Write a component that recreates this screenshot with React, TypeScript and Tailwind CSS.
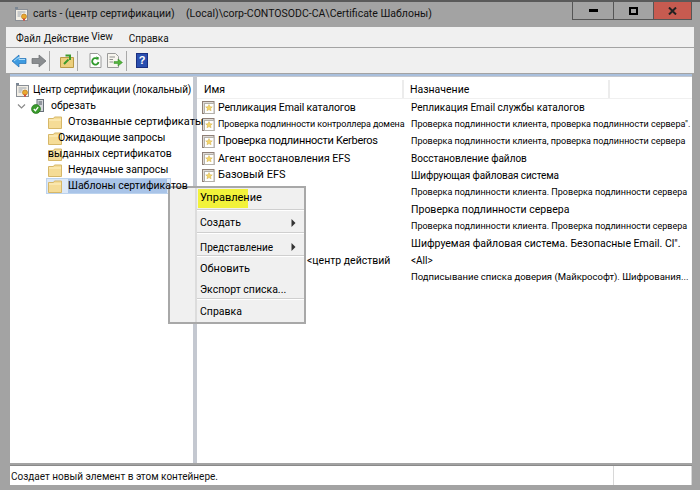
import React from "react"

const uiFont = { fontFamily: 'Roboto, "Noto Sans", sans-serif' }

function CertIcon() {
  return (
    <svg width="15" height="16" viewBox="0 0 15 16" className="shrink-0">
      <rect x="1" y="1" width="3" height="3" fill="#7b8794" />
      <rect x="1.5" y="3.5" width="12" height="11" fill="#f3efe6" stroke="#8a8f96" />
      <path d="M3.5 6h8M3.5 8h4M3.5 10h3" stroke="#9aa3ad" strokeWidth="1" />
      <circle cx="10" cy="10.5" r="2.5" fill="#e9a92f" stroke="#b9771c" strokeWidth="0.7" />
      <path d="M9 12.5v2.5l1-.8 1 .8v-2.5" fill="#d84b3a" />
    </svg>
  )
}

function ServerIcon() {
  return (
    <svg width="14" height="15" viewBox="0 0 14 15" className="shrink-0">
      <rect x="6" y="0.5" width="6.5" height="12" fill="#d5d8dc" stroke="#68707a" />
      <path d="M7.5 3h3.5M7.5 5h3.5" stroke="#4c5560" />
      <circle cx="5" cy="10" r="4.5" fill="#3a9a2c" stroke="#1f6d1a" strokeWidth="0.6" />
      <path d="M2.8 10l1.6 1.7L7.2 8.2" fill="none" stroke="#fff" strokeWidth="1.3" />
    </svg>
  )
}

function FolderIcon() {
  return (
    <svg width="14" height="13" viewBox="0 0 14 13" className="shrink-0">
      <path d="M0.5 2.5V12.5H13.5V1H6.5L5.5 2.5Z" fill="#f5dc97" stroke="#d6b768" />
      <path d="M1 4H13" stroke="#fff2c6" />
    </svg>
  )
}

function TemplateIcon() {
  return (
    <svg width="13" height="14" viewBox="0 0 13 14" className="shrink-0">
      <rect x="0.5" y="0.5" width="11.5" height="12" fill="#dedad4" stroke="#8f8078" />
      <rect x="2.5" y="2.5" width="9.5" height="10" fill="#fff" stroke="#b3b0aa" />
      <path d="M7 3.5l1 2.2 2.3.2-1.7 1.6.5 2.3-2.1-1.2-2.1 1.2.5-2.3-1.7-1.6 2.3-.2Z" fill="#f3d56a" stroke="#c9a234" strokeWidth="0.4" />
    </svg>
  )
}

function Toolbar() {
  return (
    <div className="h-[25px] mt-px mx-[6px] bg-[#f0f0f0] flex items-center pl-[5px]">
      <svg width="16" height="14" viewBox="0 0 16 14">
        <path d="M1 7L8 1V4.5H15V9.5H8V13Z" fill="#3f9be0" stroke="#1f6fb5" strokeWidth="0.7" />
        <path d="M3 7L8 3V5.5H14" fill="none" stroke="#a9dcfb" />
      </svg>
      <svg width="16" height="14" viewBox="0 0 16 14" className="ml-[4px]">
        <path d="M15 7L8 1V4.5H1V9.5H8V13Z" fill="#8a8d90" stroke="#6a6d70" strokeWidth="0.7" />
      </svg>
      <div className="w-px h-[20px] bg-[#a8a8a8] ml-[2px]" />
      <svg width="14" height="14" viewBox="0 0 14 14" className="ml-[10px]">
        <path d="M0.5 3.5V13.5H13.5V3.5Z" fill="#eccf7d" stroke="#b99a47" />
        <path d="M4 10L8.5 5.5M5.5 1.5H10V6" fill="none" stroke="#3c9a2c" strokeWidth="2" />
      </svg>
      <div className="w-px h-[20px] bg-[#a8a8a8] ml-[3px]" />
      <svg width="13" height="15" viewBox="0 0 13 15" className="ml-[11px]">
        <path d="M1 0.5H8.5L12 3.5V14.5H1Z" fill="#fff" stroke="#9a9a9a" />
        <path d="M9.5 9a3.2 3.2 0 1 1-1-3" fill="none" stroke="#2f9a2c" strokeWidth="1.8" />
        <path d="M7 3.5L10 4.5L9 7.5Z" fill="#2f9a2c" />
      </svg>
      <svg width="16" height="15" viewBox="0 0 16 15" className="ml-[5px]">
        <path d="M0.5 0.5H8.5L11.5 3.5V14.5H0.5Z" fill="#f7f5ee" stroke="#9a9a9a" />
        <path d="M2.5 4H8M2.5 6.5H6M2.5 9H6" stroke="#8f8f8f" />
        <path d="M7 8.5H11V6L15.5 9.5L11 13V10.5H7Z" fill="#55b33c" stroke="#2f8a25" strokeWidth="0.5" />
      </svg>
      <div className="w-px h-[20px] bg-[#a8a8a8] ml-[3px]" />
      <div className="ml-[9px] w-[12px] h-[15px] bg-[#2a4fb0] border border-[#1a2f80] text-white text-[11px] font-bold leading-[13px] text-center" style={{ fontFamily: '"Liberation Sans", sans-serif' }}>?</div>
    </div>
  )
}

const treeRows = [
  { label: "Отозванные сертификаты", cls: "pl-[20px] text-[11px]" },
  { label: "Ожидающие запросы", cls: "pl-[10px] text-[10.5px]" },
  { label: "выданных сертификатов", cls: "pl-0 text-[10.5px]" },
  { label: "Неудачные запросы", cls: "pl-[20px] text-[10.5px]" },
]

function Tree() {
  return (
    <div className="w-[183px] bg-white shrink-0 pt-[5px] text-[10.5px] text-black leading-[16px]">
      <div className="flex items-center h-[16px] pl-[5px] gap-[3px] whitespace-nowrap">
        <CertIcon />
        <span className="text-[10px] tracking-[-0.1px]">Центр сертификации (локальный)</span>
      </div>
      <div className="flex items-center h-[16px] pl-[7px] whitespace-nowrap">
        <svg width="9" height="7" viewBox="0 0 9 7">
          <path d="M1 1.5L4.5 5L8 1.5" fill="none" stroke="#8a8a8a" strokeWidth="1.2" />
        </svg>
        <span className="ml-[5px]"><ServerIcon /></span>
        <span className="ml-[6px]">обрезать</span>
      </div>
      {treeRows.map((r) => (
        <div key={r.label} className="relative flex items-center h-[16px] pl-[38px] whitespace-nowrap">
          <FolderIcon />
          <span className={`absolute left-[38px] ${r.cls} z-10`}>{r.label}</span>
        </div>
      ))}
      <div className="relative flex items-center h-[16px] ml-[36px] w-[125px] bg-[#dce8f7] border border-[#bcd3ee] pl-px whitespace-nowrap">
        <FolderIcon />
        <span className="absolute left-[21px] h-[14px] leading-[14px] bg-[#a9c4e8] w-[99px] z-30">Шаблоны сертификатов</span>
      </div>
    </div>
  )
}

const templates = [
  { name: "Репликация Email каталогов", nameCls: "text-[10.5px] tracking-[-0.14px]", purpose: "Репликация Email службы каталогов", cls: "text-[10px]", icon: true },
  { name: "Проверка подлинности контроллера домена", nameCls: "text-[9px] tracking-[-0.1px]", purpose: "Проверка подлинности клиента, проверка подлинности сервера\".", cls: "text-[9px]", icon: true },
  { name: "Проверка подлинности Kerberos", nameCls: "text-[11px] tracking-[-0.28px]", purpose: "Проверка подлинности клиента, проверка подлинности сервера", cls: "text-[9px]", icon: true },
  { name: "Агент восстановления EFS", nameCls: "text-[10.5px]", purpose: "Восстановление файлов", cls: "text-[10px]", icon: true },
  { name: "Базовый EFS", nameCls: "text-[11px]", purpose: "Шифрующая файловая система", cls: "text-[10px] tracking-[-0.1px]", icon: true },
  { name: "", purpose: "Проверка подлинности клиента. Проверка подлинности сервера", cls: "text-[9px]" },
  { name: "", purpose: "Проверка подлинности сервера", cls: "text-[10.5px]" },
  { name: "", purpose: "Проверка подлинности клиента. Проверка подлинности сервера", cls: "text-[9px]" },
  { name: "", purpose: "Шифруемая файловая система. Безопасные Email. Cl\".", cls: "text-[10.5px]" },
  { name: "<центр действий", nameCls: "text-[10.5px]", purpose: "<All>", cls: "text-[10px]", shift: true },
  { name: "", purpose: "Подписывание списка доверия (Майкрософт). Шифрования...", cls: "text-[9.5px]" },
]

function TemplateList() {
  return (
    <div className="flex-1 bg-white min-w-0 text-black">
      <div className="flex h-[22px] border-b border-[#f0f0f0] text-[10.5px] leading-[20px] pt-[3px]">
        <div className="w-[207px] pl-[7px] border-r-2 border-[#ececec]">Имя</div>
        <div className="w-[206px] pl-[6px] border-r-2 border-[#ececec]">Назначение</div>
      </div>
      {templates.map((t, i) => (
        <div key={i} className="flex items-center h-[17px] whitespace-nowrap">
          <div className={`w-[208px] flex items-center gap-[3px] shrink-0 ${t.shift ? "pl-[110px]" : "pl-[5px]"} ${t.nameCls ?? ""}`}>
            {t.icon && <TemplateIcon />}
            <span>{t.name}</span>
          </div>
          <span className={`pl-[6px] ${t.cls}`}>{t.purpose}</span>
        </div>
      ))}
    </div>
  )
}

function MenuItem({ label, arrow, cls }: { label: string; arrow?: boolean; cls: string }) {
  return (
    <div className={`relative flex items-center pl-[3px] pr-[8px] justify-between whitespace-nowrap ${cls}`}>
      <span>{label}</span>
      {arrow && (
        <svg width="5" height="8" viewBox="0 0 5 8">
          <path d="M0.5 0L4.5 4L0.5 8Z" fill="#333" />
        </svg>
      )}
    </div>
  )
}

function Sep() {
  return <div className="h-[2px] bg-[#cfcfcf] border-b border-white" />
}

function ContextMenu() {
  return (
    <div className="absolute left-[168px] top-[184px] w-[138px] h-[138px] bg-[#f0f0f0] border-2 border-[#a8a8a8] z-20 flex text-black">
      <div className="w-[27px] border-r-2 border-[#dcdcdc]" />
      <div className="flex-1">
        <div className="relative">
          <div className="absolute left-[1px] top-[1px] w-[50px] h-[19px] bg-[#f2f23a]" />
          <MenuItem label="Управление" cls="h-[21px] text-[11px]" />
        </div>
        <Sep />
        <MenuItem label="Создать" arrow cls="h-[21px] pt-[3px] text-[10.5px]" />
        <Sep />
        <MenuItem label="Представление" arrow cls="h-[21px] pt-[5px] text-[10px]" />
        <Sep />
        <MenuItem label="Обновить" cls="h-[21px] pt-[3px] text-[11px]" />
        <MenuItem label="Экспорт списка..." cls="h-[20px] pt-[3px] text-[10.5px]" />
        <Sep />
        <MenuItem label="Справка" cls="h-[21px] pt-[3px] text-[10.5px]" />
      </div>
    </div>
  )
}

export default function App() {
  return (
    <div className="relative w-[700px] h-[490px] overflow-hidden bg-[#a3a3a3] border-t-2 border-[#5a5a5a] text-[#111]" style={uiFont}>
      {/* title bar */}
      <div className="h-[25px] flex items-start relative">
        <div className="flex items-center pl-[14px] pt-[4px] text-[10.5px] whitespace-nowrap">
          <CertIcon />
          <span className="ml-[4px] w-[153px]">carts - (центр сертификации)</span>
          <span>(Local)\corp-CONTOSODC-CA\Certificate Шаблоны)</span>
        </div>
        <div className="ml-auto mr-[8px] flex h-[18px] border border-t-0 border-[#555]">
          <div className="w-[41px] flex items-center justify-center border-r border-[#555]">
            <div className="w-[9px] h-[3px] bg-black" />
          </div>
          <div className="w-[40px] flex items-center justify-center border-r border-[#555]">
            <div className="w-[9px] h-[8px] border-2 border-black" />
          </div>
          <div className="w-[37px] flex items-center justify-center bg-[#c75b50]">
            <svg width="9" height="8" viewBox="0 0 9 8">
              <path d="M1 0.5L8 7.5M8 0.5L1 7.5" stroke="#222" strokeWidth="2" />
            </svg>
          </div>
        </div>
      </div>

      {/* menu bar */}
      <div className="h-[20px] mx-[6px] bg-[#f0f0f0] flex items-center pl-[10px] pt-[3px] text-[10px] whitespace-nowrap">
        <span>Файл</span>
        <span className="ml-[3px]">Действие</span>
        <span className="ml-[2px] -translate-y-[2px]">View</span>
        <span className="ml-[16px]">Справка</span>
      </div>
      <Toolbar />

      {/* panes */}
      <div className="mt-[1px] ml-[10px] mr-[8px] h-[389px] bg-[#c4c8d0] border-t-2 border-[#a9bfdc] pt-px flex gap-[4px]">
        <Tree />
        <TemplateList />
      </div>

      {/* status bar */}
      <div className="ml-[10px] mr-[8px] mt-[2px] h-[20px] bg-white flex border-t border-[#8a8a8a] text-[10px] leading-[21px] whitespace-nowrap">
        <div className="w-[604px] pl-px border-r border-[#d8d8d8]">Создает новый элемент в этом контейнере.</div>
        <div className="flex-1 border-r border-[#d8d8d8]" />
      </div>

      <ContextMenu />
    </div>
  )
}
